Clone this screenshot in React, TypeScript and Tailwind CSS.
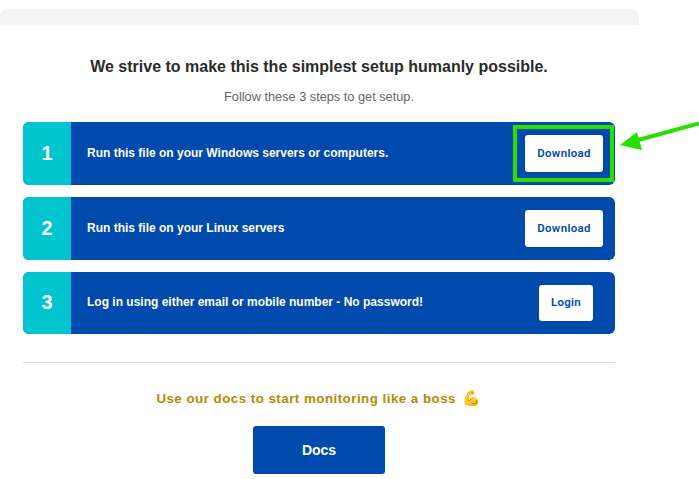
const steps = [
  { num: '1', text: 'Run this file on your Windows servers or computers.', action: 'Download', height: 'h-[63px]', button: 'w-[78px] h-[37px] mr-3' },
  { num: '2', text: 'Run this file on your Linux servers', action: 'Download', height: 'h-[63px]', button: 'w-[78px] h-[37px] mr-3' },
  { num: '3', text: 'Log in using either email or mobile number - No password!', action: 'Login', height: 'h-[62px]', button: 'w-[54px] h-[36px] mr-[22px]' },
];

const App = () => {
  return (
    <div className="relative w-[699px] h-[479px] overflow-hidden bg-white font-['Liberation_Sans',Arial,sans-serif]">
      <div className="w-[639px] pt-[9px]">
        <div className="h-4 bg-[#f4f4f4] rounded-t-lg" />

        <div className="pl-[23px] pr-6 text-center">
          <h1 className="mt-[31px] text-base leading-5 font-bold text-[#2b2b2b] translate-y-px">
            We strive to make this the simplest setup humanly possible.
          </h1>
          <p className="mt-[11px] text-[12.75px] leading-5 text-[#666666]">Follow these 3 steps to get setup.</p>

          <div className="mt-[15px] flex flex-col gap-3">
            {steps.map((step) => (
              <div key={step.num} className={`flex items-center rounded-md overflow-hidden bg-[#004aad] ${step.height}`}>
                <div className="w-12 h-full shrink-0 flex items-center justify-center pb-0.5 bg-[#00c5cf] text-white text-xl font-bold">
                  {step.num}
                </div>
                <span className="flex-1 pl-4 pb-0.5 text-left text-xs font-bold text-white">{step.text}</span>
                <button className={`flex items-center justify-center rounded-[3px] bg-white text-[#004aad] text-[11.5px] font-semibold tracking-[0.3px] font-['Roboto',sans-serif] ${step.button}`}>
                  {step.action}
                </button>
              </div>
            ))}
          </div>

          <hr className="mt-7 border-t border-[#e0e0e0]" />

          <p className="mt-[25px] text-[13.33px] leading-5 font-bold tracking-[0.48px] text-[#b98900]">
            Use our docs to start monitoring like a boss <span className="ml-0.5 text-[15px]">💪</span>
          </p>

          <button className="mt-[17px] w-[132px] h-12 rounded-[3px] bg-[#004aad] text-white text-sm font-bold">Docs</button>
        </div>
      </div>

      {/* annotation drawn over the screenshot */}
      <div className="absolute left-[513px] top-[125px] w-[101px] h-[57px] border-4 border-[#26e000]" />
      <svg className="absolute left-[615px] top-[115px]" width="84" height="40" viewBox="0 0 84 40">
        <path d="M84 8.5 L23 25" stroke="#26e000" strokeWidth="4" fill="none" />
        <path d="M5 30 L22 17 L27 35 Z" fill="#26e000" />
      </svg>
    </div>
  );
};

export default App;
